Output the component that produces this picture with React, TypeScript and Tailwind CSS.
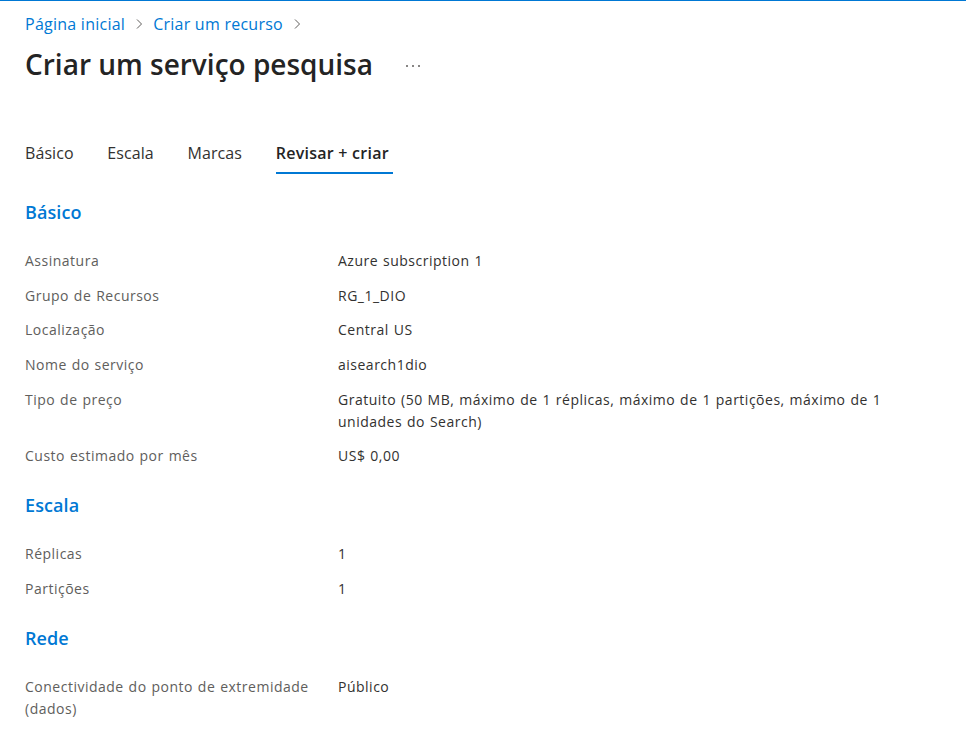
import React from "react";

type Row = { label: string; value: string };

const basico: Row[] = [
  { label: "Assinatura", value: "Azure subscription 1" },
  { label: "Grupo de Recursos", value: "RG_1_DIO" },
  { label: "Localização", value: "Central US" },
  { label: "Nome do serviço", value: "aisearch1dio" },
  {
    label: "Tipo de preço",
    value:
      "Gratuito (50 MB, máximo de 1 réplicas, máximo de 1 partições, máximo de 1 unidades do Search)",
  },
  { label: "Custo estimado por mês", value: "US$ 0,00" },
];

const escala: Row[] = [
  { label: "Réplicas", value: "1" },
  { label: "Partições", value: "1" },
];

const rede: Row[] = [
  { label: "Conectividade do ponto de extremidade (dados)", value: "Público" },
];

function Chevron() {
  return (
    <svg width="12" height="12" viewBox="0 0 12 12" className="mx-[8px] text-[#605e5c]">
      <polyline points="4,1.5 8.5,6 4,10.5" fill="none" stroke="currentColor" strokeWidth="1" />
    </svg>
  );
}

function Section({ title, rows }: { title: string; rows: Row[] }) {
  return (
    <section className="mt-[26px]">
      <h2 className="text-[18px] leading-[24px] font-semibold tracking-[0.1px] text-[#0078d4]">{title}</h2>
      <dl className="mt-[26px] grid grid-cols-[313px_552px] gap-y-[12.7px] text-[14px] leading-[22px] tracking-[0.5px] [word-spacing:0.75px]">
        {rows.map((r) => (
          <React.Fragment key={r.label}>
            <dt className="pr-[20px] text-[#605e5c]">{r.label}</dt>
            <dd className="text-[#323130]">{r.value}</dd>
          </React.Fragment>
        ))}
      </dl>
    </section>
  );
}

export default function App() {
  const tabs = ["Básico", "Escala", "Marcas", "Revisar + criar"];
  return (
    <div
      className="min-h-[730px] w-full bg-white border-t border-[#0078d4] px-[25px] pt-[12px]"
      style={{ fontFamily: '"Open Sans", "Noto Sans", sans-serif' }}
    >
      {/* Breadcrumb */}
      <nav className="flex items-center text-[16px] leading-[22px] tracking-[0.25px] text-[#0078d4]">
        <span>Página inicial</span>
        <Chevron />
        <span>Criar um recurso</span>
        <Chevron />
      </nav>

      {/* Title */}
      <div className="mt-[11px] flex items-center">
        <h1 className="text-[28px] leading-[36px] font-semibold text-[#242424]">
          Criar um serviço pesquisa
        </h1>
        <svg width="16" height="4" viewBox="0 0 16 4" className="ml-[32px] mt-[4px] text-[#605e5c]">
          <circle cx="2" cy="2" r="1" fill="currentColor" />
          <circle cx="8" cy="2" r="1" fill="currentColor" />
          <circle cx="14" cy="2" r="1" fill="currentColor" />
        </svg>
      </div>

      {/* Tabs */}
      <div className="mt-[60px] flex gap-[33.7px] text-[16px] leading-[22px] tracking-[0.08px]">
        {tabs.map((t, i) => {
          const active = i === tabs.length - 1;
          return (
            <div
              key={t}
              className={
                active
                  ? "border-b-2 border-[#0078d4] pb-[8px] pr-[4px] font-semibold tracking-[0.25px] text-[#242424]"
                  : "border-b-2 border-transparent pb-[8px] text-[#323130]"
              }
            >
              {t}
            </div>
          );
        })}
      </div>

      <Section title="Básico" rows={basico} />
      <Section title="Escala" rows={escala} />
      <Section title="Rede" rows={rede} />
    </div>
  );
}
